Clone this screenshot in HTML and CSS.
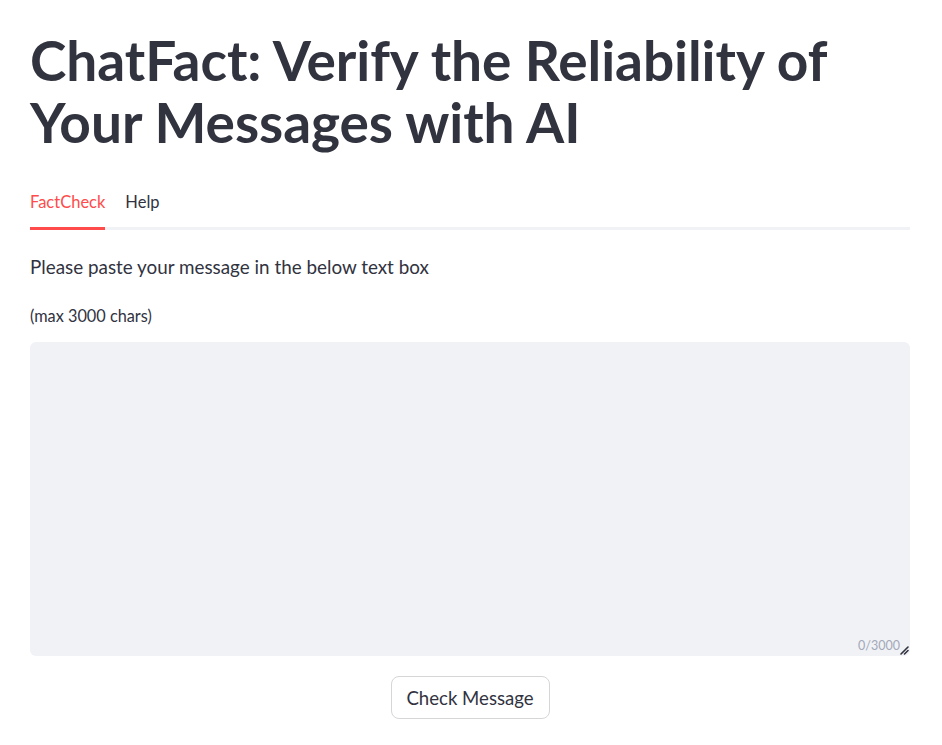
FILE: index.html
```html
<!DOCTYPE html>
<html lang="en">
<head>
<meta charset="utf-8">
<title>ChatFact</title>
<link rel="stylesheet" href="styles.css">
</head>
<body>
<main class="page">
  <h1 class="title">ChatFact: Verify the Reliability of Your Messages with AI</h1>
  <nav class="tabs">
    <div class="tab tab-active">FactCheck</div>
    <div class="tab">Help</div>
  </nav>
  <p class="lead">Please paste your message in the below text box</p>
  <label class="caption" for="msg">(max 3000 chars)</label>
  <div class="area-wrap">
    <textarea id="msg" class="area" maxlength="3000"></textarea>
    <span class="counter">0/3000</span>
    <svg class="grip" width="9" height="9" viewBox="0 0 9 9"><path d="M8 1 L1 8 M8 4.5 L4.5 8" stroke="#31333f" stroke-width="1.6" stroke-linecap="round"/></svg>
  </div>
  <div class="actions">
    <button class="btn" type="button">Check Message</button>
  </div>
</main>
</body>
</html>
```
FILE: styles.css
```css
* { box-sizing: border-box; }
html, body { margin: 0; padding: 0; background: #ffffff; }
body {
  font-family: Lato, "Noto Sans", "Liberation Sans", sans-serif;
  color: #31333f;
}
.page {
  width: 880px;
  margin-left: 30px;
  padding-top: 29px;
  display: flex;
  flex-direction: column;
}
.title {
  margin: 0;
  font-size: 55px;
  line-height: 62px;
  font-weight: 700;
  color: #31333f;
  letter-spacing: -0.05px;
}
.tabs {
  margin-top: 33px;
  display: flex;
  gap: 20px;
  border-bottom: 3px solid #f0f2f6;
}
.tab {
  font-size: 16.5px;
  line-height: 24px;
  padding: 4px 0 13px;
  margin-bottom: -3px;
  border-bottom: 3px solid transparent;
  color: #31333f;
}
.tab-active {
  color: #ff4b4b;
  border-bottom-color: #ff4b4b;
}
.lead {
  margin: 23px 0 0;
  font-size: 18.85px;
  line-height: 28px;
}
.caption {
  margin-top: 24px;
  font-size: 16.3px;
  line-height: 22px;
}
.area-wrap {
  position: relative;
  margin-top: 15px;
  height: 314px;
  background: #f0f2f6;
  border-radius: 6px;
}
.area {
  display: block;
  width: 100%;
  height: 100%;
  border: none;
  background: transparent;
  resize: none;
  outline: none;
  font: inherit;
}
.counter {
  position: absolute;
  right: 10px;
  bottom: 2px;
  font-size: 12.5px;
  line-height: 16px;
  color: #a3a8b8;
}
.grip {
  position: absolute;
  right: 1px;
  bottom: 1px;
}
.actions {
  margin-top: 20px;
  display: flex;
  justify-content: center;
}
.btn {
  width: 159px;
  height: 43px;
  background: #ffffff;
  border: 1px solid #d6d6d9;
  border-radius: 8px;
  font-family: inherit;
  font-size: 18.6px;
  color: #31333f;
}
```
